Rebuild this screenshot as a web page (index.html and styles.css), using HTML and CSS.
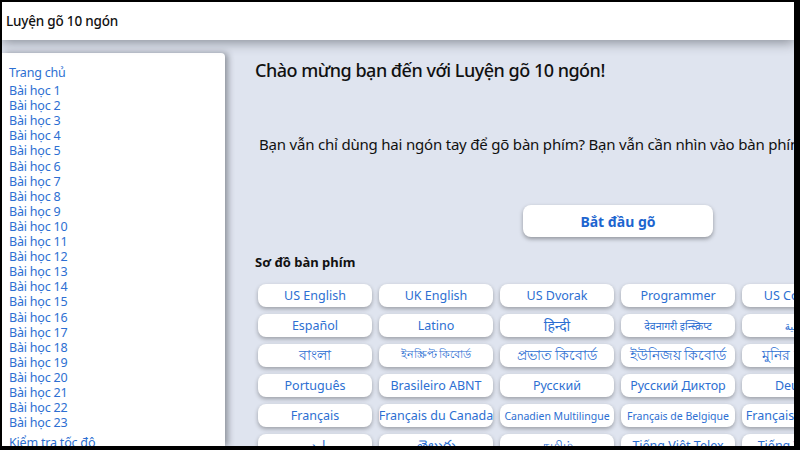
FILE: index.html
```html
<!DOCTYPE html>
<html>
<head>
  <title>Luyện gõ 10 ngón</title>
  <meta charset="utf-8">
  <link rel="stylesheet" href="styles.css">
</head>
<body>
  <div class="frame">
    <nav class="topbar">
      <span class="brand">Luyện gõ 10 ngón</span>
    </nav>
    <div class="layout">
      <aside class="sidebar">
        <ul>
          <li class="home"><a>Trang chủ</a></li>
          <li><a>Bài học 1</a></li>
          <li><a>Bài học 2</a></li>
          <li><a>Bài học 3</a></li>
          <li><a>Bài học 4</a></li>
          <li><a>Bài học 5</a></li>
          <li><a>Bài học 6</a></li>
          <li><a>Bài học 7</a></li>
          <li><a>Bài học 8</a></li>
          <li><a>Bài học 9</a></li>
          <li><a>Bài học 10</a></li>
          <li><a>Bài học 11</a></li>
          <li><a>Bài học 12</a></li>
          <li><a>Bài học 13</a></li>
          <li><a>Bài học 14</a></li>
          <li><a>Bài học 15</a></li>
          <li><a>Bài học 16</a></li>
          <li><a>Bài học 17</a></li>
          <li><a>Bài học 18</a></li>
          <li><a>Bài học 19</a></li>
          <li><a>Bài học 20</a></li>
          <li><a>Bài học 21</a></li>
          <li><a>Bài học 22</a></li>
          <li><a>Bài học 23</a></li>
          <li class="speed"><a>Kiểm tra tốc độ</a></li>
        </ul>
      </aside>
      <main class="content">
        <h1>Chào mừng bạn đến với Luyện gõ 10 ngón!</h1>
        <p class="intro">Bạn vẫn chỉ dùng hai ngón tay để gõ bàn phím? Bạn vẫn cần nhìn vào bàn phím khi gõ?</p>
        <div class="start-row">
          <button class="btn-start">Bắt đầu gõ</button>
        </div>
        <h2>Sơ đồ bàn phím</h2>
        <div class="layouts">
          <a class="kb">US English</a>
          <a class="kb">UK English</a>
          <a class="kb">US Dvorak</a>
          <a class="kb">Programmer</a>
          <a class="kb">US Colemak</a>

          <a class="kb">Español</a>
          <a class="kb">Latino</a>
          <a class="kb big">हिन्दी</a>
          <a class="kb small">देवनागरी इन्स्क्रिप्ट</a>
          <a class="kb small">العربية</a>

          <a class="kb big">বাংলা</a>
          <a class="kb small">ইনস্ক্রিপ্ট কিবোর্ড</a>
          <a class="kb big">প্রভাত কিবোর্ড</a>
          <a class="kb big">ইউনিজয় কিবোর্ড</a>
          <a class="kb big">মুনির কিবোর্ড</a>

          <a class="kb">Português</a>
          <a class="kb">Brasileiro ABNT</a>
          <a class="kb">Русский</a>
          <a class="kb">Русский Диктор</a>
          <a class="kb">Deutsch</a>

          <a class="kb">Français</a>
          <a class="kb">Français du Canada</a>
          <a class="kb small">Canadien Multilingue</a>
          <a class="kb small">Français de Belgique</a>
          <a class="kb">Français de Suisse</a>

          <a class="kb">اردو</a>
          <a class="kb big">తెలుగు</a>
          <a class="kb">தமிழ்</a>
          <a class="kb">Tiếng Việt Telex</a>
          <a class="kb">Tiếng Việt VNI</a>
        </div>
      </main>
    </div>
  </div>
</body>
</html>
```

FILE: styles.css
```css
* { margin: 0; padding: 0; box-sizing: border-box; }
html, body {
  height: 100%;
  overflow: hidden;
}
body {
  background: #000;
  font-family: 'Noto Sans', 'DejaVu Sans', sans-serif;
  color: #111;
}
.frame {
  position: relative;
  margin: 2px 6px 0 2px;
  height: 444px;
  background: #dfe4ef;
  overflow: hidden;
  display: flex;
  flex-direction: column;
}
.topbar {
  height: 38px;
  background: #fff;
  display: flex;
  align-items: center;
  padding-left: 4px;
  box-shadow: 0 3px 12px rgba(40, 44, 52, 0.45);
  position: relative;
  z-index: 2;
}
.brand {
  font-size: 13.5px;
  font-weight: 500;
  letter-spacing: -0.2px;
}
.layout {
  flex: 1;
  display: flex;
  min-height: 0;
}
.sidebar {
  width: 223px;
  flex-shrink: 0;
  margin-top: 13px;
  background: #fff;
  border-top-right-radius: 4px;
  box-shadow: 3px 0 6px rgba(40, 44, 52, 0.45);
  padding: 12px 7px 0;
  position: relative;
  z-index: 1;
}
.sidebar ul { list-style: none; }
.sidebar li {
  font-size: 12.5px;
  line-height: 15.1px;
  letter-spacing: -0.2px;
}
.sidebar li a {
  color: #2d6fd2;
  cursor: pointer;
}
.sidebar li.home { margin-bottom: 3px; }
.sidebar li.speed { margin-top: 5px; }
.content {
  flex: 1;
  min-width: 0;
  padding: 18px 0 0 30px;
  overflow: hidden;
}
.content h1 {
  font-size: 18px;
  font-weight: 500;
  letter-spacing: -0.5px;
  line-height: 24px;
}
.intro {
  margin-top: 52px;
  padding-left: 4px;
  font-size: 15px;
  letter-spacing: -0.2px;
  white-space: nowrap;
}
.start-row {
  display: flex;
  padding-left: 268px;
  margin-top: 51px;
}
.btn-start {
  width: 190px;
  height: 32px;
  background: #fff;
  border: none;
  border-radius: 8px;
  box-shadow: 0 2px 4px rgba(0, 0, 0, 0.35);
  color: #1d65cf;
  font-family: inherit;
  font-size: 14px;
  font-weight: 700;
  cursor: pointer;
}
.content h2 {
  margin-top: 16px;
  font-size: 13px;
  font-weight: 700;
  line-height: 18px;
}
.layouts {
  margin: 13px 0 0 3px;
  display: grid;
  grid-template-columns: repeat(5, 114px);
  grid-auto-rows: 23px;
  column-gap: 7px;
  row-gap: 7px;
}
.kb {
  background: #fff;
  border-radius: 8px;
  box-shadow: 0 2px 4px rgba(0, 0, 0, 0.3);
  color: #2d6fd2;
  font-size: 12.5px;
  display: flex;
  align-items: center;
  justify-content: center;
  white-space: nowrap;
  overflow: hidden;
  cursor: pointer;
}
.kb.small { font-size: 10.5px; }
.kb.big { font-size: 14px; }
```
